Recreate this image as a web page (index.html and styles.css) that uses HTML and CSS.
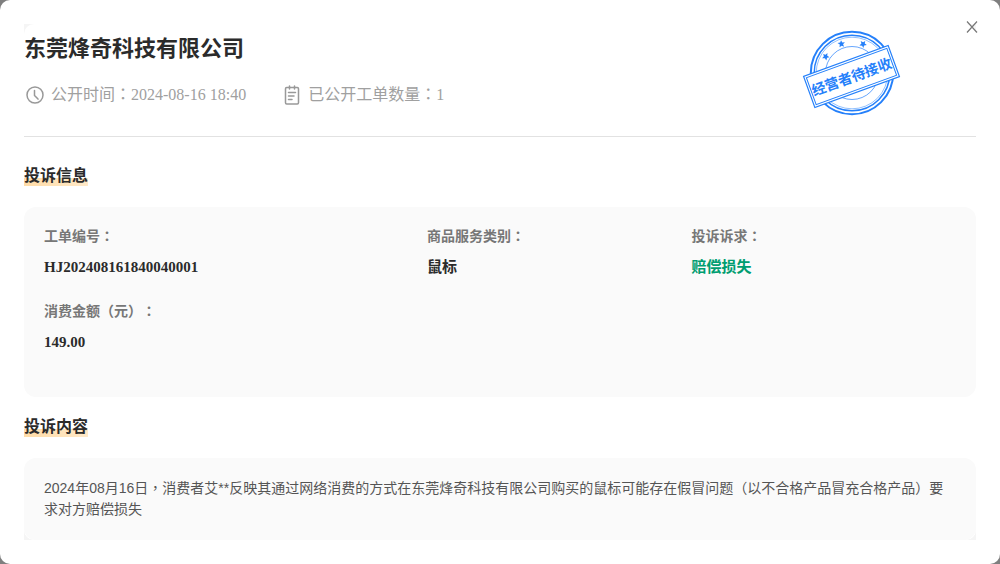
FILE: index.html
```html
<!DOCTYPE html>
<html lang="zh-CN">
<head>
<meta charset="utf-8">
<meta name="viewport" content="width=device-width, initial-scale=1">
<title>东莞烽奇科技有限公司</title>
<link rel="stylesheet" href="styles.css">
</head>
<body>
<main class="dialog">
  <div class="dialog-body">
    <div class="sheet">
      <header class="header">
        <div class="summary">
          <h1 class="company">东莞烽奇科技有限公司</h1>
          <div class="meta">
            <span class="meta-item">
              <svg class="icon" viewBox="0 0 22 20" fill="none" stroke="#999" stroke-width="1.5" stroke-linecap="round" aria-hidden="true"><circle cx="11" cy="10" r="8"/><path d="M10.5 5.5v5l3.5 3.6"/></svg>
              <span>公开时间<span lang="zh-TW">：</span>2024-08-16 18:40</span>
            </span>
            <span class="meta-item">
              <svg class="icon" viewBox="0 0 22 20" fill="none" stroke="#999" stroke-width="1.5" stroke-linecap="round" aria-hidden="true"><rect x="4.5" y="2.5" width="13" height="16.5" rx="1.2"/><path d="M8.5 1v3M13.5 1v3M7.5 7.5h7M7.5 11h5.5M7.5 14.5h3.5"/></svg>
              <span>已公开工单数量<span lang="zh-TW">：</span>1</span>
            </span>
          </div>
        </div>
        <svg class="stamp" viewBox="0 0 100 100" role="img" aria-label="经营者待接收">
          <g fill="none" stroke="#2580fa">
            <circle cx="50" cy="49" r="41.2" stroke-width="2"/>
            <circle cx="50" cy="49" r="37.8" stroke-width="1.5"/>
            <circle cx="50" cy="49" r="35.8" stroke-width=".5"/>
            <circle cx="50" cy="49" r="26.5" stroke-width=".7"/>
          </g>
          <g fill="#2580fa">
            <path id="star" d="M39 16.2l1.3 2.2 2.6-.2-1.8 2 1 2.5-2.4-1-2.2 1.6.3-2.7-2.3-1.5 2.7-.6z"/>
            <use href="#star" transform="rotate(41 50 49)"/>
            <use href="#star" transform="rotate(-38 50 49)"/>
          </g>
          <g transform="rotate(-20 49.5 52.5)">
            <rect x="4.5" y="36" width="90" height="33" fill="#fff" stroke="#2580fa" stroke-width="1.2"/>
            <rect x="6.7" y="38.2" width="85.6" height="28.6" fill="none" stroke="#2580fa" stroke-width="1"/>
            <text class="stamp-text" x="49.5" y="58" text-anchor="middle">经营者待接收</text>
          </g>
        </svg>
      </header>

      <section class="section">
        <h2 class="section-title">投诉信息</h2>
        <dl class="panel details">
          <div class="field"><dt>工单编号<span lang="zh-TW">：</span></dt><dd>HJ202408161840040001</dd></div>
          <div class="field"><dt>商品服务类别<span lang="zh-TW">：</span></dt><dd>鼠标</dd></div>
          <div class="field"><dt>投诉诉求<span lang="zh-TW">：</span></dt><dd class="demand">赔偿损失</dd></div>
          <div class="field"><dt>消费金额（元）<span lang="zh-TW">：</span></dt><dd>149.00</dd></div>
        </dl>
      </section>
      <section class="section">
        <h2 class="section-title">投诉内容</h2>
        <p class="panel content">2024年08月16日<span lang="zh-TW">，</span>消费者艾**反映其通过网络消费的方式在东莞烽奇科技有限公司购买的鼠标可能存在假冒问题（以不合格产品冒充合格产品）要求对方赔偿损失</p>
      </section>
    </div>
  </div>
  <button class="close" type="button" aria-label="关闭">
    <svg viewBox="0 0 12 12" fill="none" stroke="#777" stroke-width="1.2" aria-hidden="true"><path d="M1 0.5l10 11M11 0.5l-10 11"/></svg>
  </button>
</main>
</body>
</html>
```
FILE: styles.css
```css
* {
  box-sizing: border-box;
}

body {
  margin: 0;
  background: #7f7f7f;
  color: #2b2b2b;
  font-family: "Liberation Serif", "Noto Sans CJK SC", serif;
  text-spacing-trim: space-all;
}

h1, h2, p, dl, dd {
  margin: 0;
}

.dialog {
  position: relative;
  min-height: 100vh;
  padding: 24px;
  border-radius: 10px;
  background: #fff;
}

.dialog-body {
  background: #f5f5f5;
}

.sheet {
  border-radius: 10px;
  background: #fff;
}

.header {
  display: flex;
  justify-content: space-between;
  height: 113px;
  padding-right: 74px;
  border-bottom: 1px solid #e2e2e2;
}

.company {
  padding-top: 9px;
  font-size: 22px;
  line-height: 32px;
}

.meta {
  display: flex;
  gap: 35px;
  margin-top: 18px;
  color: #a0a0a0;
  font-size: 16px;
  line-height: 24px;
}

.meta-item {
  display: flex;
  align-items: center;
  gap: 5px;
}

.icon {
  width: 22px;
  height: 20px;
}

.stamp {
  flex: none;
  width: 100px;
  height: 100px;
}

.stamp-text {
  fill: #2580fa;
  font-family: "Noto Sans CJK SC", sans-serif;
  font-size: 14px;
  font-weight: 700;
}

.close {
  position: absolute;
  top: 17px;
  right: 18px;
  width: 20px;
  height: 20px;
  padding: 4px;
  border: 0;
  background: none;
  cursor: pointer;
}

.close svg {
  display: block;
}

.section {
  padding-top: 29px;
}

.section + .section {
  padding-top: 20px;
}

.section-title {
  width: fit-content;
  background: linear-gradient(90deg, #ffdca8, #ffe9c8) bottom / 100% 8px no-repeat;
  font-size: 16px;
  line-height: 20px;
}

.panel {
  margin-top: 21px;
  padding: 20px;
  border-radius: 12px;
  background: #fafafa;
}

.details {
  display: grid;
  grid-template-columns: 42% 29% 29%;
  row-gap: 23px;
  padding-bottom: 43px;
}

.field dt {
  color: #777;
  font-size: 14px;
  font-weight: 700;
  line-height: 20px;
}

.field dd {
  margin-top: 8px;
  font-size: 15px;
  font-weight: 700;
  line-height: 24px;
}

.field .demand {
  color: #009d70;
}

.content {
  color: #555;
  font-family: "Liberation Sans", "Noto Sans CJK SC", sans-serif;
  font-size: 14px;
  line-height: 21px;
}
```
